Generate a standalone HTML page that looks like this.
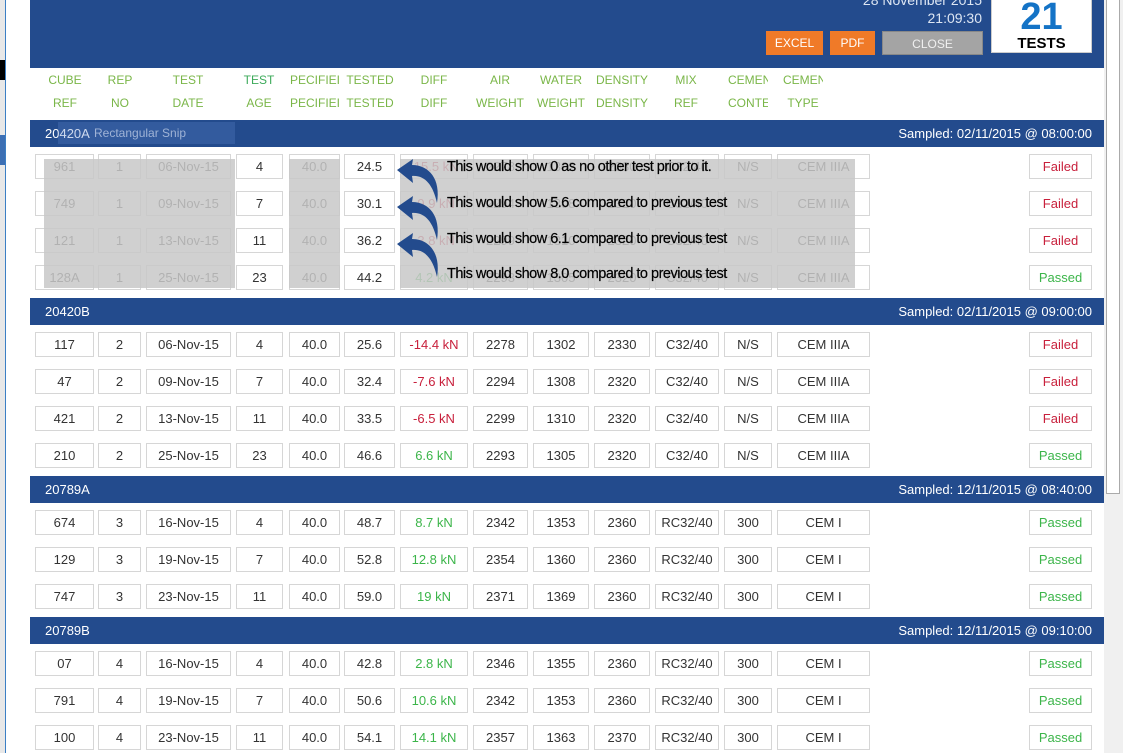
<!DOCTYPE html>
<html><head><meta charset="utf-8"><style>
*{margin:0;padding:0;box-sizing:border-box}
body{width:1123px;height:753px;overflow:hidden;background:#fff;font-family:"Liberation Sans",sans-serif;position:relative;font-size:13px;color:#333}
.a{position:absolute}
.hdr{left:30px;top:0;width:1074px;height:68px;background:#234b8d}
.btn{position:absolute;top:31px;height:24px;color:#fff;font-size:12px;text-align:center;line-height:24px}
.hl{position:absolute;color:#7ab648;font-size:12px;text-align:center;width:70px;white-space:nowrap;overflow:hidden}
.grp{position:absolute;left:30px;width:1074px;height:27px;background:#234b8d;color:#fff;font-size:13px;line-height:27px}
.grp span{position:absolute;left:15px}
.grp i{font-style:normal;position:absolute;right:12px}
.r{position:absolute;left:0;height:25px;width:1100px}
.r div{position:absolute;top:0;height:25px;border:1px solid #d6d6d6;text-align:center;line-height:23px;font-size:13px;background:#fff}
.r div:nth-child(1){left:35px;width:59px}
.r div:nth-child(2){left:98px;width:43px}
.r div:nth-child(3){left:146px;width:85px}
.r div:nth-child(4){left:236px;width:47px}
.r div:nth-child(5){left:289px;width:51px}
.r div:nth-child(6){left:344px;width:51px}
.r div:nth-child(7){left:400px;width:68px}
.r div:nth-child(8){left:473px;width:55px}
.r div:nth-child(9){left:533px;width:56px}
.r div:nth-child(10){left:594px;width:56px}
.r div:nth-child(11){left:655px;width:64px}
.r div:nth-child(12){left:724px;width:48px}
.r div:nth-child(13){left:777px;width:93px}
.r div:nth-child(14){left:1029px;width:63px}
.f{color:#c8203c}.p{color:#3cb54a}
.ov{position:absolute;background:rgba(200,200,200,0.85)}
.note{position:absolute;left:447px;font-size:14.5px;color:#000;letter-spacing:-0.5px;-webkit-text-stroke:0.2px #000;white-space:nowrap}
</style></head><body>
<div class="a" style="left:0;top:0;width:5px;height:753px;background:#e8e8e8"></div>
<div class="a" style="left:5px;top:0;width:1px;height:753px;background:#3c7fc4"></div>
<div class="a" style="left:0;top:60px;width:5px;height:20px;background:#000"></div>
<div class="a" style="left:0;top:135px;width:5px;height:30px;background:#3c6fb4"></div>
<div class="a hdr"></div>
<div class="a" style="left:800px;top:-8px;width:182px;text-align:right;color:#dde6f3;font-size:14px">28 November 2015</div>
<div class="a" style="left:800px;top:10px;width:182px;text-align:right;color:#dde6f3;font-size:14px">21:09:30</div>
<div class="btn" style="left:766px;width:57px;background:#f07a28">EXCEL</div>
<div class="btn" style="left:830px;width:45px;background:#f07a28">PDF</div>
<div class="btn" style="left:882px;width:101px;background:#a4a4a4;color:#f0f0f0;border:1px solid #888">CLOSE</div>
<div class="a" style="left:991px;top:-2px;width:101px;height:55px;background:#fff;border:1px solid #ccc;text-align:center">
<div style="color:#1473c6;font-size:38px;font-weight:bold;line-height:38px;margin-top:-1px">21</div>
<div style="color:#000;font-size:15px;font-weight:bold;line-height:16px">TESTS</div></div>
<div class="a" style="left:1104px;top:0;width:19px;height:753px;background:#f0f0f0"></div>
<div class="a" style="left:1106px;top:0;width:14px;height:494px;background:#fff;border:1px solid #aaa;border-top:none"></div>

<div class="hl" style="left:30px;top:73px">CUBE</div><div class="hl" style="left:30px;top:96px">REF</div>
<div class="hl" style="left:85px;top:73px">REP</div><div class="hl" style="left:85px;top:96px">NO</div>
<div class="hl" style="left:153px;top:73px">TEST</div><div class="hl" style="left:153px;top:96px">DATE</div>
<div class="hl" style="left:224px;top:73px;color:#3caa5a">TEST</div><div class="hl" style="left:224px;top:96px">AGE</div>
<div class="hl" style="left:289px;top:73px;width:52px">PECIFIEI</div><div class="hl" style="left:289px;top:96px;width:52px">PECIFIEI</div>
<div class="hl" style="left:335px;top:73px">TESTED</div><div class="hl" style="left:335px;top:96px">TESTED</div>
<div class="hl" style="left:399px;top:73px">DIFF</div><div class="hl" style="left:399px;top:96px">DIFF</div>
<div class="hl" style="left:465px;top:73px">AIR</div><div class="hl" style="left:465px;top:96px">WEIGHT</div>
<div class="hl" style="left:526px;top:73px">WATER</div><div class="hl" style="left:526px;top:96px">WEIGHT</div>
<div class="hl" style="left:587px;top:73px">DENSITY</div><div class="hl" style="left:587px;top:96px">DENSITY</div>
<div class="hl" style="left:651px;top:73px">MIX</div><div class="hl" style="left:651px;top:96px">REF</div>
<div class="hl" style="left:728px;top:73px;width:40px">CEMENT</div><div class="hl" style="left:728px;top:96px;width:40px">CONTENT</div>
<div class="hl" style="left:783px;top:73px;width:40px">CEMENT</div><div class="hl" style="left:768px;top:96px">TYPE</div>

<div class="grp" style="top:120px"><span>20420A</span><i>Sampled: 02/11/2015 @ 08:00:00</i></div>
<div class="a" style="left:58px;top:122px;width:177px;height:22px;background:rgba(90,130,200,0.3);color:#9fb3d6;font-size:12px;line-height:22px;padding-left:36px">Rectangular Snip</div>
<div class="r" style="top:154px"><div>961</div><div>1</div><div>06-Nov-15</div><div>4</div><div>40.0</div><div>24.5</div><div class="f">-15.5 kN</div><div>2278</div><div>1302</div><div>2330</div><div>C32/40</div><div>N/S</div><div>CEM IIIA</div><div class="f">Failed</div></div>
<div class="r" style="top:191px"><div>749</div><div>1</div><div>09-Nov-15</div><div>7</div><div>40.0</div><div>30.1</div><div class="f">-9.9 kN</div><div>2294</div><div>1308</div><div>2320</div><div>C32/40</div><div>N/S</div><div>CEM IIIA</div><div class="f">Failed</div></div>
<div class="r" style="top:228px"><div>121</div><div>1</div><div>13-Nov-15</div><div>11</div><div>40.0</div><div>36.2</div><div class="f">-3.8 kN</div><div>2299</div><div>1310</div><div>2320</div><div>C32/40</div><div>N/S</div><div>CEM IIIA</div><div class="f">Failed</div></div>
<div class="r" style="top:265px"><div>128A</div><div>1</div><div>25-Nov-15</div><div>23</div><div>40.0</div><div>44.2</div><div class="p">4.2 kN</div><div>2293</div><div>1305</div><div>2320</div><div>C32/40</div><div>N/S</div><div>CEM IIIA</div><div class="p">Passed</div></div>
<div class="ov" style="left:44px;top:159px;width:191px;height:129px"></div>
<div class="ov" style="left:289px;top:159px;width:51px;height:129px"></div>
<div class="ov" style="left:400px;top:159px;width:455px;height:129px"></div>
<svg class="a" style="left:395px;top:155px" width="50" height="125" viewBox="0 0 50 125">
<g fill="#234b8d">
<path d="M2 15 L18 4 L17 10 C34 10 46 24 42 48 C38 30 30 20 17 21 L18 28 Z"/>
<path d="M2 52 L18 41 L17 47 C34 47 46 61 42 85 C38 67 30 57 17 58 L18 65 Z"/>
<path d="M2 89 L18 78 L17 84 C34 84 46 98 42 122 C38 104 30 94 17 95 L18 102 Z"/>
</g></svg>
<div class="note" style="top:159px">This would show 0 as no other test prior to it.</div>
<div class="note" style="top:195px">This would show 5.6 compared to previous test</div>
<div class="note" style="top:231px">This would show 6.1 compared to previous test</div>
<div class="note" style="top:266px">This would show 8.0 compared to previous test</div>

<div class="grp" style="top:298px"><span>20420B</span><i>Sampled: 02/11/2015 @ 09:00:00</i></div>
<div class="r" style="top:332px"><div>117</div><div>2</div><div>06-Nov-15</div><div>4</div><div>40.0</div><div>25.6</div><div class="f">-14.4 kN</div><div>2278</div><div>1302</div><div>2330</div><div>C32/40</div><div>N/S</div><div>CEM IIIA</div><div class="f">Failed</div></div>
<div class="r" style="top:369px"><div>47</div><div>2</div><div>09-Nov-15</div><div>7</div><div>40.0</div><div>32.4</div><div class="f">-7.6 kN</div><div>2294</div><div>1308</div><div>2320</div><div>C32/40</div><div>N/S</div><div>CEM IIIA</div><div class="f">Failed</div></div>
<div class="r" style="top:406px"><div>421</div><div>2</div><div>13-Nov-15</div><div>11</div><div>40.0</div><div>33.5</div><div class="f">-6.5 kN</div><div>2299</div><div>1310</div><div>2320</div><div>C32/40</div><div>N/S</div><div>CEM IIIA</div><div class="f">Failed</div></div>
<div class="r" style="top:443px"><div>210</div><div>2</div><div>25-Nov-15</div><div>23</div><div>40.0</div><div>46.6</div><div class="p">6.6 kN</div><div>2293</div><div>1305</div><div>2320</div><div>C32/40</div><div>N/S</div><div>CEM IIIA</div><div class="p">Passed</div></div>

<div class="grp" style="top:476px"><span>20789A</span><i>Sampled: 12/11/2015 @ 08:40:00</i></div>
<div class="r" style="top:510px"><div>674</div><div>3</div><div>16-Nov-15</div><div>4</div><div>40.0</div><div>48.7</div><div class="p">8.7 kN</div><div>2342</div><div>1353</div><div>2360</div><div>RC32/40</div><div>300</div><div>CEM I</div><div class="p">Passed</div></div>
<div class="r" style="top:547px"><div>129</div><div>3</div><div>19-Nov-15</div><div>7</div><div>40.0</div><div>52.8</div><div class="p">12.8 kN</div><div>2354</div><div>1360</div><div>2360</div><div>RC32/40</div><div>300</div><div>CEM I</div><div class="p">Passed</div></div>
<div class="r" style="top:584px"><div>747</div><div>3</div><div>23-Nov-15</div><div>11</div><div>40.0</div><div>59.0</div><div class="p">19 kN</div><div>2371</div><div>1369</div><div>2360</div><div>RC32/40</div><div>300</div><div>CEM I</div><div class="p">Passed</div></div>

<div class="grp" style="top:617px"><span>20789B</span><i>Sampled: 12/11/2015 @ 09:10:00</i></div>
<div class="r" style="top:651px"><div>07</div><div>4</div><div>16-Nov-15</div><div>4</div><div>40.0</div><div>42.8</div><div class="p">2.8 kN</div><div>2346</div><div>1355</div><div>2360</div><div>RC32/40</div><div>300</div><div>CEM I</div><div class="p">Passed</div></div>
<div class="r" style="top:688px"><div>791</div><div>4</div><div>19-Nov-15</div><div>7</div><div>40.0</div><div>50.6</div><div class="p">10.6 kN</div><div>2342</div><div>1353</div><div>2360</div><div>RC32/40</div><div>300</div><div>CEM I</div><div class="p">Passed</div></div>
<div class="r" style="top:725px"><div>100</div><div>4</div><div>23-Nov-15</div><div>11</div><div>40.0</div><div>54.1</div><div class="p">14.1 kN</div><div>2357</div><div>1363</div><div>2370</div><div>RC32/40</div><div>300</div><div>CEM I</div><div class="p">Passed</div></div>
</body></html>
